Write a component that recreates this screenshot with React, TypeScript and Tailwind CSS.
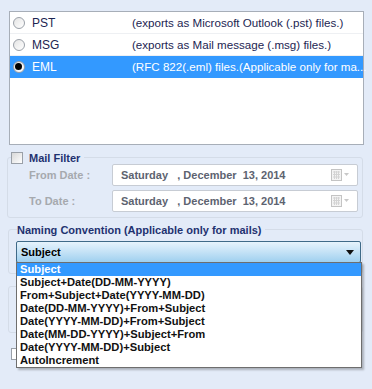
import React from "react";

const font = { fontFamily: "'Liberation Sans', Arial, sans-serif" };

const formats = [
  { name: "PST", desc: "(exports as Microsoft Outlook (.pst) files.)", checked: false },
  { name: "MSG", desc: "(exports as Mail message (.msg) files.)", checked: false },
  { name: "EML", desc: "(RFC 822(.eml) files.(Applicable only for ma...", checked: true },
];

const namings = [
  "Subject",
  "Subject+Date(DD-MM-YYYY)",
  "From+Subject+Date(YYYY-MM-DD)",
  "Date(DD-MM-YYYY)+From+Subject",
  "Date(YYYY-MM-DD)+From+Subject",
  "Date(MM-DD-YYYY)+Subject+From",
  "Date(YYYY-MM-DD)+Subject",
  "AutoIncrement",
];

function Radio({ checked }: { checked: boolean }) {
  return (
    <span className="w-[12px] h-[12px] rounded-full border border-[#9aa0a8] bg-gradient-to-br from-[#e4e4e4] to-white flex items-center justify-center">
      {checked && <span className="w-[7px] h-[7px] rounded-full bg-black" />}
    </span>
  );
}

function CalendarIcon() {
  return (
    <svg width="19" height="12" viewBox="0 0 19 12">
      <rect x="0.5" y="0.5" width="10" height="11" fill="#f4f4f4" stroke="#c4c4c4" />
      <path d="M2 3h7M2 5.5h7M2 8h7M3.5 2v8M5.5 2v8M7.5 2v8" stroke="#d4d4d4" strokeWidth="1" />
      <path d="M13 4h5l-2.5 3z" fill="#c8c8c8" />
    </svg>
  );
}

function DateBox() {
  return (
    <div className="w-[246px] h-[22px] bg-white border border-[#c7ccd4] rounded-[2px] flex items-center pl-[8px] pr-[7px]">
      <span className="flex-1 text-[11px] font-bold text-[#5d6370] whitespace-pre">Saturday   , December  13, 2014</span>
      <CalendarIcon />
    </div>
  );
}

export default function App() {
  return (
    <div className="relative w-[372px] h-[389px] bg-[#e3ebf8] overflow-hidden" style={font}>
      {/* Format list */}
      <div className="ml-[9px] mt-[11px] w-[355px] h-[134px] bg-white border border-[#a7aeb8]">
        {formats.map((f) => (
          <div
            key={f.name}
            className={`h-[22px] flex items-center border-b ${
              f.checked ? "bg-[#3399ff] border-[#3399ff] text-white" : "border-[#eef0f3] text-[#1c2552]"
            }`}
          >
            <div className="w-[17px] shrink-0 flex justify-center">
              <Radio checked={f.checked} />
            </div>
            <span className="w-[105px] shrink-0 pl-[5px] text-[12px]">{f.name}</span>
            <span className="text-[11.6px] whitespace-nowrap">{f.desc}</span>
          </div>
        ))}
      </div>

      {/* Mail filter */}
      <div className="relative ml-[7px] mt-[12px] w-[356px] h-[61px] border border-[#d4dce8] rounded-[3px]">
        <div className="absolute -top-[8px] left-[3px] flex items-center gap-[6px] bg-[#e3ebf8] pr-[4px]">
          <span className="w-[12px] h-[12px] border border-[#9aa0a8] bg-gradient-to-br from-[#d8d8d8] to-white" />
          <span className="text-[11px] font-bold text-[#1f3270]">Mail Filter</span>
        </div>
        <div className="flex flex-col gap-[4px] mt-[6px]">
          <div className="flex items-center">
            <span className="w-[104px] shrink-0 pl-[21px] text-[11px] font-bold text-[#a6a9ae]">From Date :</span>
            <DateBox />
          </div>
          <div className="flex items-center">
            <span className="w-[104px] shrink-0 pl-[21px] text-[11px] font-bold text-[#a6a9ae]">To Date :</span>
            <DateBox />
          </div>
        </div>
      </div>

      {/* Naming convention */}
      <div className="relative ml-[8px] mt-[11px] w-[355px] h-[45px] border border-[#d4dce8] rounded-[3px]">
        <span className="absolute -top-[8px] left-[8px] bg-[#e3ebf8] pr-[4px] text-[11px] font-bold text-[#1f3270]">
          Naming Convention (Applicable only for mails)
        </span>
        <div className="ml-[7px] mt-[11px] w-[345px] h-[22px] border border-[#3f6a88] rounded-[2px] bg-gradient-to-b from-[#e6f3fc] via-[#c4e2f6] to-[#9fd0ef] flex items-center pl-[4px] pr-[6px]">
          <span className="flex-1 text-[11px] font-bold text-black">Subject</span>
          <svg width="8" height="5" viewBox="0 0 8 5">
            <path d="M0 0h8L4 5z" fill="#111" />
          </svg>
        </div>
      </div>

      {/* Group hidden behind the list */}
      <div className="ml-[8px] mt-[12px] w-[355px] h-[47px] border border-[#d4dce8] rounded-[3px]" />
      <div className="ml-[11px] mt-[15px] w-[12px] h-[12px] border border-[#9aa0a8] bg-white" />

      {/* Dropdown list */}
      <div className="absolute left-[16px] top-[262px] w-[346px] bg-white border border-[#6e6e6e] shadow-[2px_2px_2px_rgba(0,0,0,0.25)]">
        {namings.map((n, i) => (
          <div
            key={n}
            className={`h-[13px] leading-[13px] pl-[3px] text-[11.2px] font-bold whitespace-nowrap ${
              i === 0 ? "bg-[#3399ff] text-white" : "text-[#111]"
            }`}
          >
            {n}
          </div>
        ))}
      </div>
    </div>
  );
}
